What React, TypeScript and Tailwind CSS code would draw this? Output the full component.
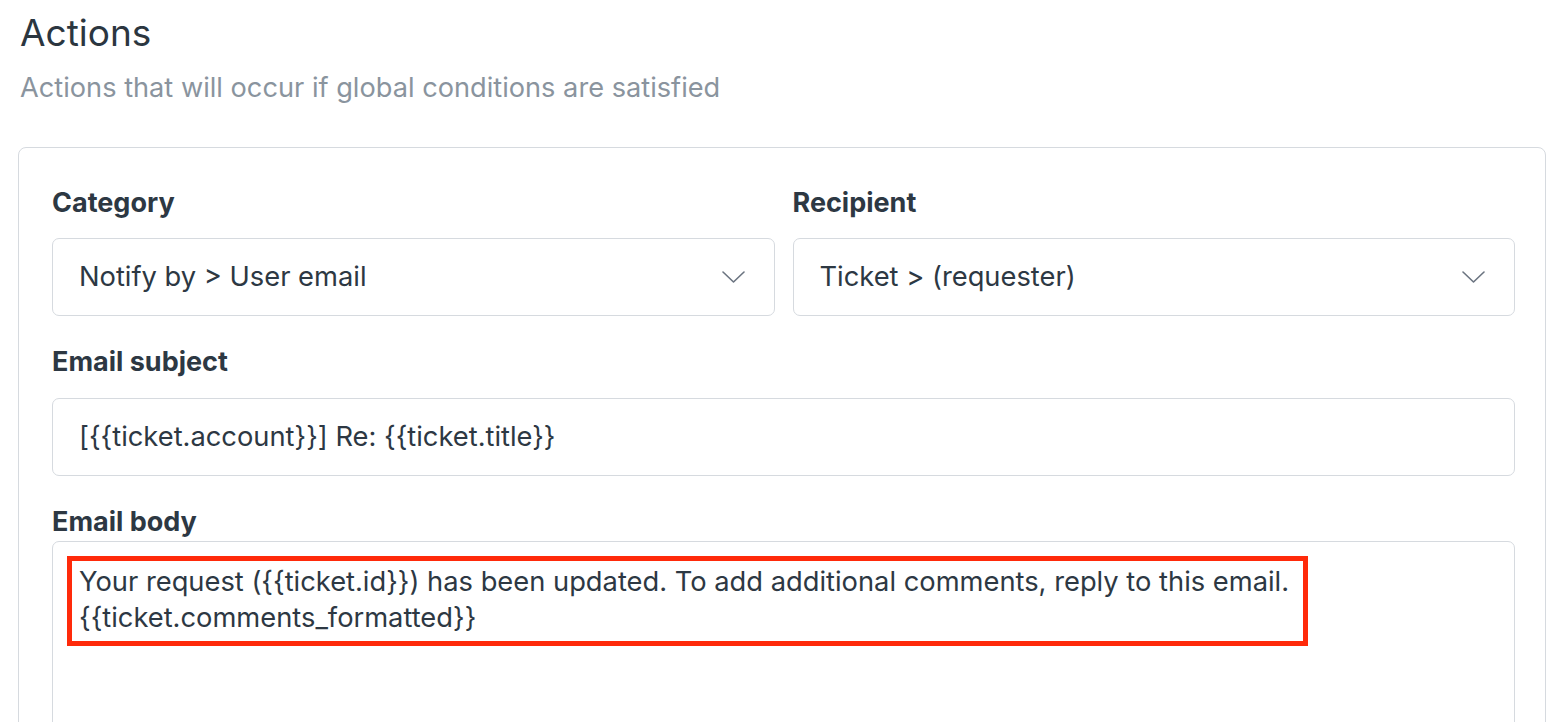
import React from "react";

function Chevron() {
  return (
    <svg width="23" height="12" viewBox="0 0 23 12" fill="none" className="shrink-0">
      <path d="M1 1l10.5 10L22 1" stroke="#6b7480" strokeWidth="1.6" strokeLinecap="round" strokeLinejoin="round" />
    </svg>
  );
}

function SelectBox({ value }: { value: string }) {
  return (
    <div className="h-[78px] border border-[#d6dadf] rounded-[7px] bg-white flex items-center justify-between pl-[26px] pr-[29px]">
      <span className="text-[27.3px] leading-[32px] text-[#2d3843]">{value}</span>
      <Chevron />
    </div>
  );
}

export default function App() {
  return (
    <div className="w-full h-[722px] overflow-hidden bg-white font-['Inter','Liberation_Sans',sans-serif]">
      <div className="pl-[20px] pt-[10px]">
        <h1 className="text-[37px] leading-[46px] font-normal text-[#2b3640]">Actions</h1>
        <p className="mt-[16px] text-[27.2px] leading-[32px] text-[#8a949e]">
          Actions that will occur if global conditions are satisfied
        </p>
      </div>

      <div className="mt-[43px] ml-[18px] mr-[16px] border border-[#d6dadf] rounded-[8px] pl-[33px] pr-[30px] pt-[39px] pb-[40px]">
        <div className="grid grid-cols-2 gap-x-[18px]">
          <div>
            <label className="block text-[27px] leading-[32px] font-bold text-[#2d3843] mb-[19px]">Category</label>
            <SelectBox value="Notify by > User email" />
          </div>
          <div>
            <label className="block text-[27px] leading-[32px] font-bold text-[#2d3843] mb-[19px]">Recipient</label>
            <SelectBox value="Ticket > (requester)" />
          </div>
        </div>

        <label className="block mt-[30px] text-[27px] leading-[32px] font-bold text-[#2d3843] mb-[20px]">Email subject</label>
        <div className="h-[78px] border border-[#d6dadf] rounded-[7px] flex items-center pl-[26px]">
          <span className="text-[27.3px] leading-[32px] text-[#2d3843]">{"[{{ticket.account}}] Re: {{ticket.title}}"}</span>
        </div>

        <label className="block mt-[30px] text-[27px] leading-[32px] font-bold text-[#2d3843] mb-[3px]">Email body</label>
        <div className="h-[260px] border border-[#d6dadf] rounded-[7px] pt-[14px] pl-[14px]">
          <div className="w-[1241px] border-[5px] border-[#ff2a0a] pt-[3px] pb-[5px] pl-[7px] text-[27.3px] leading-[36px] text-[#2d3843] whitespace-nowrap">
            <div>{"Your request ({{ticket.id}}) has been updated. To add additional comments, reply to this email."}</div>
            <div>{"{{ticket.comments_formatted}}"}</div>
          </div>
        </div>
      </div>
    </div>
  );
}
